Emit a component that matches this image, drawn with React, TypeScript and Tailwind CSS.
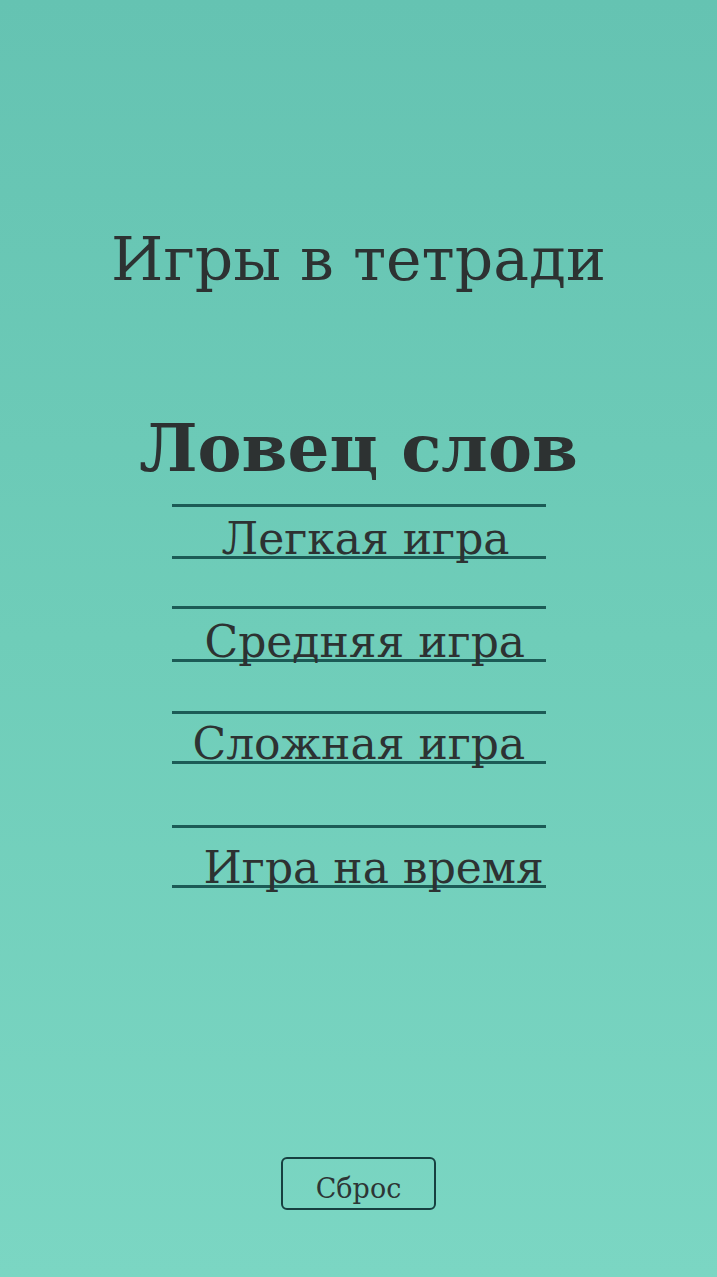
import React from "react";

const items = [
  { label: "Легкая игра", h: "h-[55px]", mt: "mt-0", pl: "pl-[50px]" },
  { label: "Средняя игра", h: "h-[56px]", mt: "mt-[47px]", pl: "pl-[33px]" },
  { label: "Сложная игра", h: "h-[53px]", mt: "mt-[49px]", pl: "pl-[21px]" },
  { label: "Игра на время", h: "h-[63px]", mt: "mt-[61px]", pl: "pl-[32px]" },
];

export default function App() {
  return (
    <div
      className="w-full h-[1277px] flex flex-col items-center bg-gradient-to-b from-[#65c3b2] via-[#6fcdb9] to-[#7bd6c3] text-[#2d3232]"
      style={{ fontFamily: '"DejaVu Serif", serif' }}
    >
      <h1 className="mt-[229px] text-[60px] leading-[60px] font-normal whitespace-nowrap">
        Игры в тетради
      </h1>
      <h2 className="mt-[126px] text-[66px] leading-[66px] font-bold whitespace-nowrap">
        Ловец слов
      </h2>
      <div className="mt-[23px] w-[374px] flex flex-col">
        {items.map((it) => (
          <button
            key={it.label}
            className={`${it.h} ${it.mt} ${it.pl} w-full border-y-[3px] border-[#1c5b56] flex flex-col justify-end items-start`}
          >
            <span className="text-[44px] leading-[44px] mb-[-5px] whitespace-nowrap">
              {it.label}
            </span>
          </button>
        ))}
      </div>
      <button className="mt-auto mb-[67px] w-[155px] h-[53px] border-2 border-[#173f40] rounded-md flex items-center justify-center pt-[10px] text-[27px] leading-none text-[#2d3535]">
        Сброс
      </button>
    </div>
  );
}
